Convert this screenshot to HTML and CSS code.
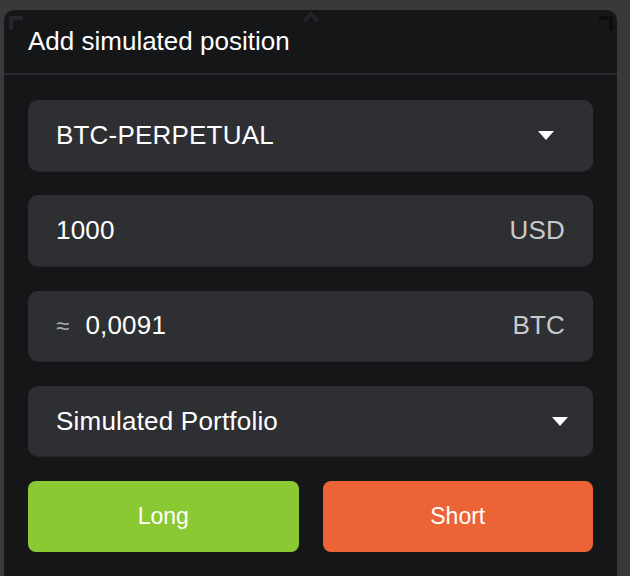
FILE: index.html
```html
<!DOCTYPE html>
<html lang="en">
<head>
    <meta charset="UTF-8">
    <meta name="viewport" content="width=device-width, initial-scale=1.0">
    <title>Add simulated position</title>
    <link rel="stylesheet" href="styles.css">
</head>
<body>
    <div class="panel">
        <span class="corner corner-left"></span>
        <span class="corner corner-right"></span>
        <svg class="grip" width="20" height="14" viewBox="0 0 20 14">
            <path d="M3 11 L10 4 L17 11" fill="none" stroke="#232427" stroke-width="4"/>
        </svg>
        <div class="panel-header">Add simulated position</div>
        <div class="panel-body">
            <div class="field select">
                <span class="value">BTC-PERPETUAL</span>
                <span class="caret caret-wide"></span>
            </div>
            <div class="field">
                <span class="value">1000</span>
                <span class="unit">USD</span>
            </div>
            <div class="field">
                <span class="value"><span class="approx">≈</span>0,0091</span>
                <span class="unit">BTC</span>
            </div>
            <div class="field select">
                <span class="value">Simulated Portfolio</span>
                <span class="caret"></span>
            </div>
            <div class="actions">
                <button class="btn btn-long">Long</button>
                <button class="btn btn-short">Short</button>
            </div>
        </div>
    </div>
</body>
</html>
```

FILE: styles.css
```css
body {
    margin: 0;
    padding: 10px 13px 0 4px;
    background-color: #38393b;
    font-family: "Liberation Sans", Arial, sans-serif;
    color: #fff;
    overflow: hidden;
    height: 576px;
    box-sizing: border-box;
}
.panel {
    position: relative;
    background-color: #151618;
    border-radius: 10px 10px 0 0;
    height: 100%;
}
.corner {
    position: absolute;
    top: 6px;
    width: 10px;
    height: 10px;
    border-top: 4px solid #25262a;
}
.corner-left {
    left: 5px;
    border-left: 4px solid #25262a;
}
.corner-right {
    right: 4px;
    border-right: 4px solid #0c0d0e;
    border-top-color: #0c0d0e;
}
.grip {
    position: absolute;
    top: 0;
    left: 297px;
}
.panel-header {
    height: 63px;
    padding-left: 24px;
    font-size: 26px;
    line-height: 63px;
    border-bottom: 2px solid #2a2b2e;
}
.panel-body {
    display: flex;
    flex-direction: column;
    gap: 24.75px;
    padding: 25px 24px 0 24px;
}
.field {
    display: flex;
    align-items: center;
    justify-content: space-between;
    height: 70.5px;
    padding: 0 28px;
    background-color: #2e2f32;
    border-radius: 10px;
    box-shadow: 0 1px 0 #252629;
    font-size: 26px;
    letter-spacing: 0.2px;
}
.unit {
    color: #c9c9cb;
}
.approx {
    color: #a9aaac;
    font-size: 24px;
    margin-right: 16px;
}
.caret {
    width: 0;
    height: 0;
    margin-right: -3px;
    border-left: 8px solid transparent;
    border-right: 8px solid transparent;
    border-top: 9px solid #fff;
}
.caret-wide {
    margin-right: 11px;
}
.actions {
    display: flex;
    gap: 24px;
}
.btn {
    flex: 1;
    height: 70.5px;
    border: none;
    border-radius: 8px;
    color: #fff;
    font-family: "Liberation Sans", Arial, sans-serif;
    font-size: 23px;
}
.btn-long {
    background-color: #8bc933;
}
.btn-short {
    background-color: #ec6335;
}
```
